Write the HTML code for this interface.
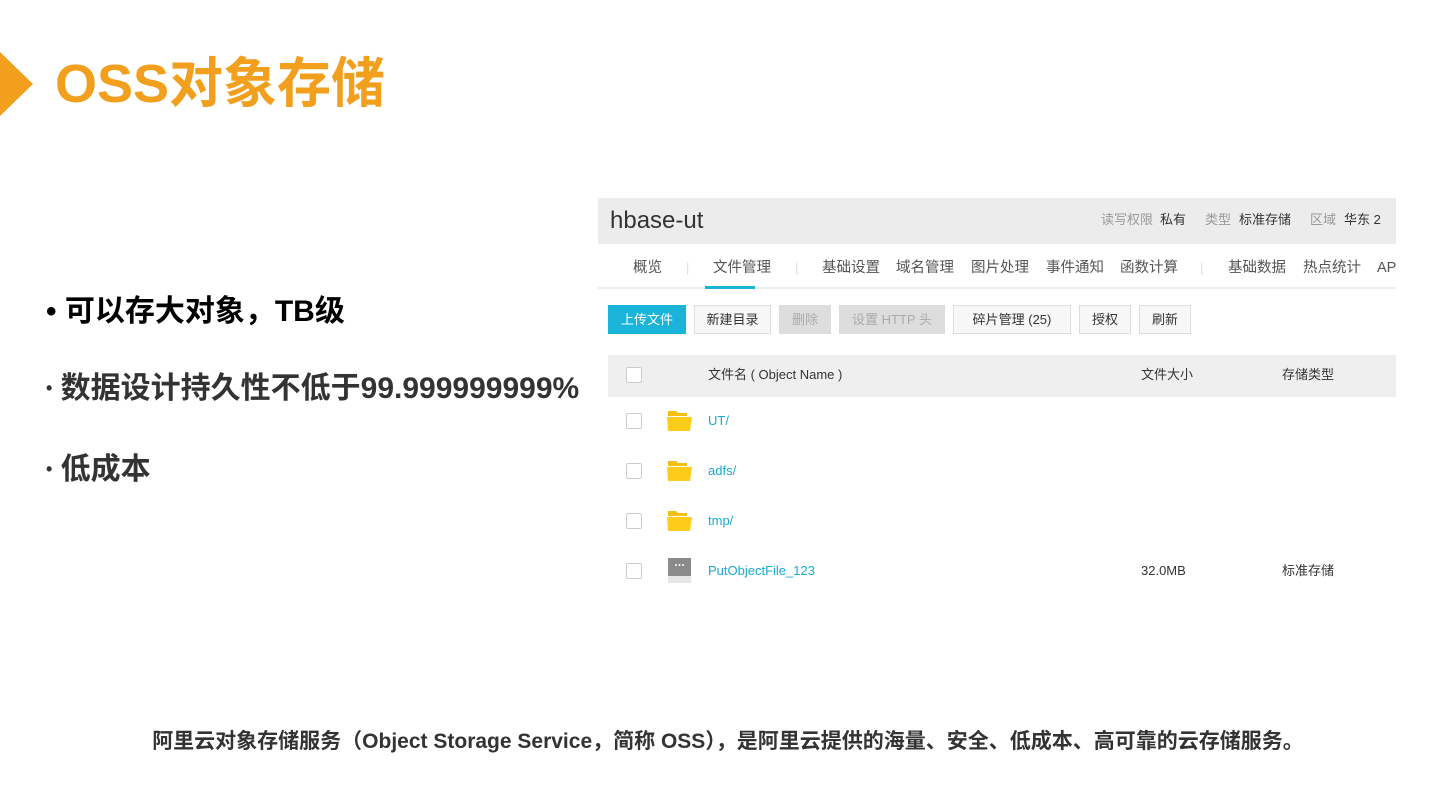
<!DOCTYPE html>
<html><head><meta charset="utf-8"><style>
*{margin:0;padding:0;box-sizing:border-box}
body{width:1440px;height:810px;background:#fff;position:relative;overflow:hidden;font-family:"Liberation Sans","Noto Sans CJK SC",sans-serif}
.abs{position:absolute;white-space:nowrap}
.tri{position:absolute;left:0;top:52px;width:0;height:0;border-top:32px solid transparent;border-bottom:32px solid transparent;border-left:33px solid #F29F1E}
.title{left:55px;top:52px;font-size:54px;font-weight:bold;color:#F29F1E;line-height:64px}
.b{font-size:30px;font-weight:bold;line-height:36px}
.cap{left:0;width:1456px;text-align:center;top:725px;font-size:21px;font-weight:bold;color:#333}
.btn{position:absolute;top:305px;height:29px;border:1px solid #ddd;background:#f7f7f7;font-size:13px;line-height:27px;text-align:center;color:#333}
.cb{position:absolute;left:626px;width:16px;height:16px;border:1px solid #ccc;border-radius:2px;background:#fff}
.fold{position:absolute;left:667px;width:25px;height:21px}
.lnk{position:absolute;left:708px;font-size:13px;color:#1aa9d0;line-height:16px}
.nav{position:absolute;top:258px;font-size:14.5px;color:#555;line-height:20px;white-space:nowrap}
.sep{position:absolute;top:260px;font-size:13px;color:#ddd}
.t13{position:absolute;font-size:13px;color:#333;line-height:16px;white-space:nowrap}
</style></head><body>
<div class="tri"></div>
<div class="abs title">OSS对象存储</div>
<div class="abs b" style="left:46px;top:294px;color:#000">• 可以存大对象，TB级</div>
<div class="abs b" style="left:46px;top:370px;color:#333"><span style="font-size:18px;vertical-align:4px">•</span> 数据设计持久性不低于99.999999999%</div>
<div class="abs b" style="left:46px;top:451px;color:#333"><span style="font-size:18px;vertical-align:4px">•</span> 低成本</div>

<div class="abs" style="left:598px;top:198px;width:798px;height:46px;background:#ececec"></div>
<div class="abs" style="left:610px;top:206px;font-size:24px;color:#333;line-height:30px">hbase-ut</div>
<div class="t13" style="left:1101px;top:212px;color:#999">读写权限</div>
<div class="t13" style="left:1160px;top:212px">私有</div>
<div class="t13" style="left:1205px;top:212px;color:#999">类型</div>
<div class="t13" style="left:1239px;top:212px">标准存储</div>
<div class="t13" style="left:1310px;top:212px;color:#999">区域</div>
<div class="t13" style="left:1344px;top:212px">华东 2</div>

<div class="abs" style="left:598px;top:287px;width:798px;height:2px;background:#e8eef0"></div>
<div class="abs" style="left:705px;top:286px;width:50px;height:3px;background:#1ab4d8"></div>
<div class="nav" style="left:633px">概览</div>
<div class="sep" style="left:686px">|</div>
<div class="nav" style="left:713px">文件管理</div>
<div class="sep" style="left:795px">|</div>
<div class="nav" style="left:822px">基础设置</div>
<div class="nav" style="left:896px">域名管理</div>
<div class="nav" style="left:971px">图片处理</div>
<div class="nav" style="left:1046px">事件通知</div>
<div class="nav" style="left:1120px">函数计算</div>
<div class="sep" style="left:1200px">|</div>
<div class="nav" style="left:1228px">基础数据</div>
<div class="nav" style="left:1303px">热点统计</div>
<div class="nav" style="left:1377px;width:19px;overflow:hidden">API</div>

<div class="btn" style="left:608px;width:78px;background:#1ab4d8;border-color:#1ab4d8;color:#fff">上传文件</div>
<div class="btn" style="left:694px;width:77px">新建目录</div>
<div class="btn" style="left:779px;width:52px;background:#ddd;color:#aaa">删除</div>
<div class="btn" style="left:839px;width:106px;background:#ddd;color:#aaa">设置 HTTP 头</div>
<div class="btn" style="left:953px;width:118px">碎片管理 (25)</div>
<div class="btn" style="left:1079px;width:52px">授权</div>
<div class="btn" style="left:1139px;width:52px">刷新</div>

<div class="abs" style="left:608px;top:355px;width:788px;height:42px;background:#efefef"></div>
<div class="cb" style="top:367px"></div>
<div class="t13" style="left:708px;top:367px">文件名 ( Object Name )</div>
<div class="t13" style="left:1141px;top:367px">文件大小</div>
<div class="t13" style="left:1282px;top:367px">存储类型</div>

<div class="cb" style="top:413px"></div>
<svg class="fold" style="top:410px" viewBox="0 0 25 21"><path d="M1 1h8l2 2h9v3H1z" fill="#f5bf10"/><path d="M0 7h25l-2 14H1z" fill="#ffcc1a"/></svg>
<div class="lnk" style="top:413px">UT/</div>
<div class="cb" style="top:463px"></div>
<svg class="fold" style="top:460px" viewBox="0 0 25 21"><path d="M1 1h8l2 2h9v3H1z" fill="#f5bf10"/><path d="M0 7h25l-2 14H1z" fill="#ffcc1a"/></svg>
<div class="lnk" style="top:463px">adfs/</div>
<div class="cb" style="top:513px"></div>
<svg class="fold" style="top:510px" viewBox="0 0 25 21"><path d="M1 1h8l2 2h9v3H1z" fill="#f5bf10"/><path d="M0 7h25l-2 14H1z" fill="#ffcc1a"/></svg>
<div class="lnk" style="top:513px">tmp/</div>
<div class="cb" style="top:563px"></div>
<svg class="fold" style="top:558px;height:25px" viewBox="0 0 25 25"><rect x="1" y="0" width="23" height="18" fill="#8a8a8a"/><rect x="1" y="18" width="23" height="7" fill="#e6e6e6"/><circle cx="9" cy="7" r="1" fill="#fff"/><circle cx="12.5" cy="7" r="1" fill="#fff"/><circle cx="16" cy="7" r="1" fill="#fff"/></svg>
<div class="lnk" style="top:563px">PutObjectFile_123</div>
<div class="t13" style="left:1141px;top:563px">32.0MB</div>
<div class="t13" style="left:1282px;top:563px">标准存储</div>

<div class="abs cap">阿里云对象存储服务（Object Storage Service，简称 OSS），是阿里云提供的海量、安全、低成本、高可靠的云存储服务。</div>
</body></html>
